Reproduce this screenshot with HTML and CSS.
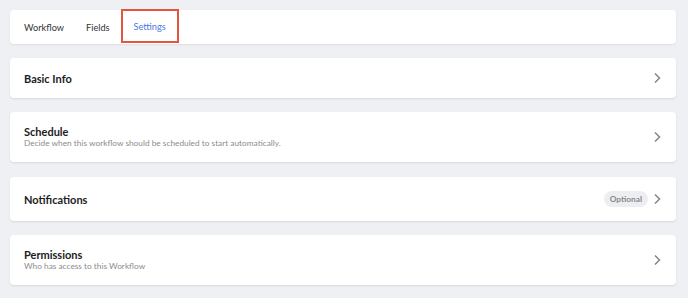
FILE: index.html
```html
<!DOCTYPE html>
<html lang="en">
<head>
  <meta charset="UTF-8">
  <meta name="viewport" content="width=device-width, initial-scale=1.0">
  <title>Workflow Settings</title>
  <link rel="stylesheet" href="styles.css">
</head>
<body>
  <div class="page">
    <nav class="tabs">
      <a class="tab">Workflow</a>
      <a class="tab">Fields</a>
      <a class="tab active">Settings</a>
    </nav>

    <div class="section">
      <div class="section-text">
        <div class="section-title">Basic Info</div>
      </div>
      <svg class="chevron" width="8" height="12" viewBox="0 0 8 12"><path d="M2 1.5 L6.5 6 L2 10.5" fill="none" stroke="#858585" stroke-width="1.5"/></svg>
    </div>

    <div class="section section-sub">
      <div class="section-text">
        <div class="section-title">Schedule</div>
        <div class="section-desc">Decide when this workflow should be scheduled to start automatically.</div>
      </div>
      <svg class="chevron" width="8" height="12" viewBox="0 0 8 12"><path d="M2 1.5 L6.5 6 L2 10.5" fill="none" stroke="#858585" stroke-width="1.5"/></svg>
    </div>

    <div class="section section-notify">
      <div class="section-text">
        <div class="section-title">Notifications</div>
      </div>
      <span class="badge">Optional</span>
      <svg class="chevron" width="8" height="12" viewBox="0 0 8 12"><path d="M2 1.5 L6.5 6 L2 10.5" fill="none" stroke="#858585" stroke-width="1.5"/></svg>
    </div>

    <div class="section section-sub">
      <div class="section-text">
        <div class="section-title">Permissions</div>
        <div class="section-desc">Who has access to this Workflow</div>
      </div>
      <svg class="chevron" width="8" height="12" viewBox="0 0 8 12"><path d="M2 1.5 L6.5 6 L2 10.5" fill="none" stroke="#858585" stroke-width="1.5"/></svg>
    </div>
  </div>
</body>
</html>
```

FILE: styles.css
```css
/* General */
body {
  font-family: 'Lato', 'Liberation Sans', sans-serif;
  background-color: #eef0f4;
  margin: 0;
}

.page {
  padding: 10px 12px 10px 10px;
  display: flex;
  flex-direction: column;
  gap: 14px;
}

/* Tabs */
.tabs {
  display: flex;
  height: 34px;
  padding-left: 3px;
  background: white;
  border-radius: 4px;
  box-shadow: 0 1px 2px rgba(0, 0, 0, 0.08);
}

.tab {
  display: flex;
  align-items: center;
  padding: 0 11px;
  font-size: 9.2px;
  color: #333;
}

.tab.active {
  color: #4c7be0;
  height: 34px;
  margin-top: -1px;
  box-sizing: border-box;
  border: 2px solid #e4553f;
}

/* Sections */
.section {
  display: flex;
  align-items: center;
  box-sizing: border-box;
  background: white;
  border-radius: 4px;
  box-shadow: 0 1px 2px rgba(0, 0, 0, 0.1);
  padding: 0 14px;
  height: 40px;
}

.section-sub {
  height: 50px;
}

.section-notify {
  height: 44px;
  margin-top: 1px;
}

.section-text {
  flex: 1;
}

.section-title {
  font-size: 11px;
  font-weight: bold;
  color: #1c1c1c;
  line-height: 13px;
}

.section-desc {
  font-size: 8.3px;
  color: #8c8c8c;
  line-height: 11px;
}

.badge {
  background: #edeef1;
  color: #8a8a8a;
  font-size: 8.3px;
  font-weight: bold;
  padding: 3px 6px;
  border-radius: 8px;
  margin-right: 5px;
}

.chevron {
  margin-right: 1px;
}
```
